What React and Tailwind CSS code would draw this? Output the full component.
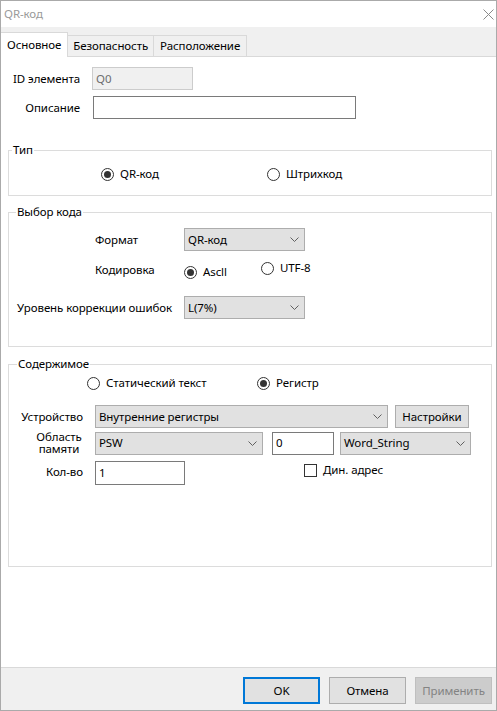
import React from "react";

const Chevron = () => (
  <svg width="9" height="5" viewBox="0 0 9 5" className="shrink-0">
    <path d="M0.5 0.5 L4.5 4.5 L8.5 0.5" fill="none" stroke="#606060" strokeWidth="1" />
  </svg>
);

const Radio = ({ checked, label }) => (
  <div className="flex items-center h-[16px]">
    <span className="w-[13px] h-[13px] rounded-full border border-[#333333] bg-white flex items-center justify-center shrink-0">
      {checked && <span className="w-[7px] h-[7px] rounded-full bg-[#333333]" />}
    </span>
    <span className="ml-[6px] whitespace-nowrap">{label}</span>
  </div>
);

const Select = ({ className, value }) => (
  <div className={"h-[23px] bg-[#e1e1e1] border border-[#adadad] flex items-center justify-between pl-[3px] pr-[5px] " + className}>
    <span className="whitespace-nowrap">{value}</span>
    <Chevron />
  </div>
);

const Input = ({ className, value }) => (
  <div className={"h-[23px] bg-white border border-[#7a7a7a] flex items-center pl-[3px] " + className}>
    <span>{value}</span>
  </div>
);

export default function App() {
  return (
    <div className="w-[497px] h-[711px] border border-[#aaaaaa] bg-white flex flex-col text-[11.5px] leading-[16px] tracking-[-0.1px] text-black font-['Noto_Sans',sans-serif] overflow-hidden">
      {/* Title bar */}
      <div className="h-[26px] flex items-center justify-between pl-[3px] pr-[2px] shrink-0">
        <span className="text-[#9a9a9a]">QR-код</span>
        <svg width="11" height="11" viewBox="0 0 11 11">
          <path d="M0.5 0.5 L10.5 10.5 M10.5 0.5 L0.5 10.5" stroke="#8a8a8a" strokeWidth="1" />
        </svg>
      </div>

      {/* Tab strip */}
      <div className="h-[30px] bg-[#f0f0f0] border-b border-[#d9d9d9] flex items-end shrink-0">
        <div className="h-[25px] -mb-px bg-white border-t border-r border-[#d9d9d9] px-[6px] pt-[4px] relative z-10">
          Основное
        </div>
        <div className="h-[21px] border-t border-r border-[#d9d9d9] px-[5px] pt-[2px]">Безопасность</div>
        <div className="h-[21px] border-t border-r border-[#d9d9d9] px-[6px] pt-[2px]">Расположение</div>
      </div>

      {/* Panel */}
      <div className="flex-1 bg-white flex flex-col">
        <div className="flex items-center mt-[10px]">
          <span className="w-[79px] text-right">ID элемента</span>
          <div className="ml-[12px] w-[101px] h-[23px] bg-[#f0f0f0] border border-[#cccccc] flex items-center pl-[3px] text-[#6d6d6d]">
            Q0
          </div>
        </div>
        <div className="flex items-center mt-[6px]">
          <span className="w-[79px] text-right">Описание</span>
          <Input className="ml-[13px] w-[263px]" value="" />
        </div>

        {/* Тип */}
        <fieldset className="ml-[7px] w-[484px] mt-[23px] border border-[#dcdcdc]">
          <legend className="ml-[3px] px-[1px]">Тип</legend>
          <div className="h-[37px] pt-[8px] pl-[92px] flex items-start">
            <div className="w-[166px]">
              <Radio checked label="QR-код" />
            </div>
            <Radio label="Штрихкод" />
          </div>
        </fieldset>

        {/* Выбор кода */}
        <fieldset className="ml-[7px] w-[484px] mt-[8px] border border-[#dcdcdc]">
          <legend className="ml-[7px] px-[1px]">Выбор кода</legend>
          <div className="pt-[8px] flex items-center">
            <span className="ml-[86px] w-[89px]">Формат</span>
            <Select className="w-[121px]" value="QR-код" />
          </div>
          <div className="flex items-start h-[45px]">
            <span className="ml-[86px] w-[89px] mt-[11px]">Кодировка</span>
            <div className="w-[77px] mt-[13px]">
              <Radio checked label="Ascll" />
            </div>
            <div className="mt-[9px]">
              <Radio label="UTF-8" />
            </div>
          </div>
          <div className="flex items-center pb-[27px]">
            <span className="ml-[8px] w-[167px] whitespace-nowrap">Уровень коррекции ошибок</span>
            <Select className="w-[121px]" value="L(7%)" />
          </div>
        </fieldset>

        {/* Содержимое */}
        <fieldset className="ml-[7px] w-[484px] mt-[9px] border border-[#dcdcdc]">
          <legend className="ml-[8px] px-[1px]">Содержимое</legend>
          <div className="pt-[3px] pl-[78px] flex items-start">
            <div className="w-[170px]">
              <Radio label="Статический текст" />
            </div>
            <Radio checked label="Регистр" />
          </div>
          <div className="flex items-center mt-[14px]">
            <span className="w-[74px] text-right">Устройство</span>
            <Select className="ml-[12px] w-[293px]" value="Внутренние регистры" />
            <div className="ml-[7px] w-[74px] h-[23px] bg-[#e1e1e1] border border-[#adadad] flex items-center justify-center">
              Настройки
            </div>
          </div>
          <div className="flex items-center mt-[3px]">
            <div className="w-[74px] flex justify-end">
              <span className="text-center leading-[12px] w-[48px]">Область памяти</span>
            </div>
            <Select className="ml-[12px] w-[168px]" value="PSW" />
            <Input className="ml-[9px] w-[62px]" value="0" />
            <Select className="ml-[6px] w-[131px]" value="Word_String" />
          </div>
          <div className="flex items-start mt-[6px] h-[105px]">
            <span className="w-[74px] text-right mt-[3px]">Кол-во</span>
            <Input className="ml-[12px] w-[90px] h-[24px]" value="1" />
            <div className="ml-[119px] mt-[1px] flex items-center">
              <span className="w-[13px] h-[13px] border border-[#333333] bg-white" />
              <span className="ml-[6px]">Дин. адрес</span>
            </div>
          </div>
        </fieldset>
      </div>

      {/* Bottom bar */}
      <div className="h-[43px] bg-[#f0f0f0] border-t border-[#d9d9d9] flex items-start justify-end pt-[9px] pr-[4px] gap-[9px] shrink-0">
        <div className="w-[77px] h-[27px] bg-[#e1e1e1] border-2 border-[#0078d7] flex items-center justify-center">OK</div>
        <div className="w-[77px] h-[27px] bg-[#e1e1e1] border border-[#adadad] flex items-center justify-center">Отмена</div>
        <div className="w-[77px] h-[27px] bg-[#cccccc] border border-[#bfbfbf] flex items-center justify-center text-[#838383]">Применить</div>
      </div>
    </div>
  );
}
